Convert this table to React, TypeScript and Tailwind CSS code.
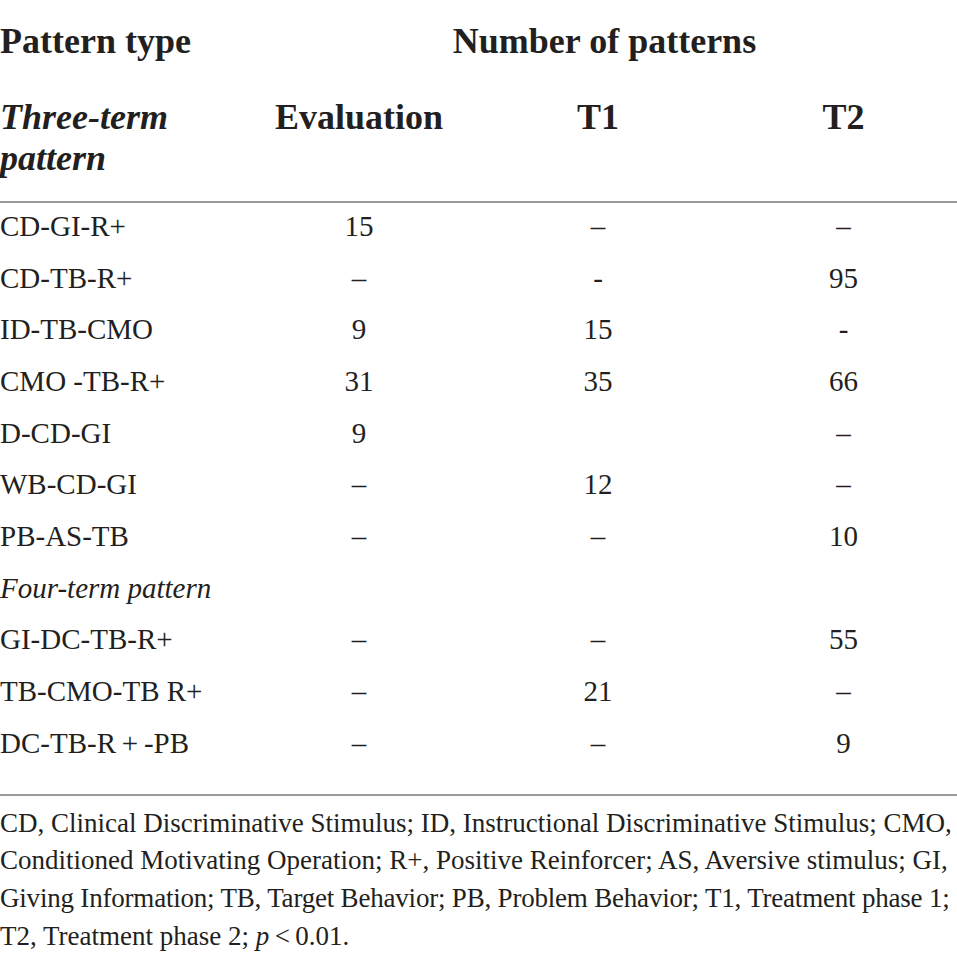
import React from "react";

const rows: [string, string, string, string, boolean?][] = [
  ["CD-GI-R+", "15", "\u2013", "\u2013"],
  ["CD-TB-R+", "\u2013", "-", "95"],
  ["ID-TB-CMO", "9", "15", "-"],
  ["CMO -TB-R+", "31", "35", "66"],
  ["D-CD-GI", "9", "", "\u2013"],
  ["WB-CD-GI", "\u2013", "12", "\u2013"],
  ["PB-AS-TB", "\u2013", "\u2013", "10"],
  ["Four-term pattern", "", "", "", true],
  ["GI-DC-TB-R+", "\u2013", "\u2013", "55"],
  ["TB-CMO-TB R+", "\u2013", "21", "\u2013"],
  ["DC-TB-R\u2009+\u2009-PB", "\u2013", "\u2013", "9"],
];

export default function App() {
  return (
    <div
      className="w-[957px] h-[958px] bg-white text-[#231f20] overflow-hidden"
      style={{ fontFamily: '"Liberation Serif", "Times New Roman", serif' }}
    >
      {/* Header */}
      <div className="border-b-2 border-[#9a9a9a]">
        <div className="grid grid-cols-[252px_705px] pt-[20.6px] text-[36px] leading-[40px] font-bold">
          <div className="whitespace-nowrap">Pattern type</div>
          <div className="text-center whitespace-nowrap">Number of patterns</div>
        </div>
        <div className="grid grid-cols-[252px_214px_264px_227px] mt-[38.7px] pb-[23.7px] text-[36px] leading-[37px] font-bold">
          <div className="italic">
            <div>Three-term</div>
            <div className="mt-[4px]">pattern</div>
          </div>
          <div className="text-center">Evaluation</div>
          <div className="text-center">T1</div>
          <div className="text-center">T2</div>
        </div>
      </div>

      {/* Body */}
      <div className="border-b-2 border-[#9a9a9a] pb-[22px] text-[29px]">
        {rows.map(([a, b, c, d, italic], i) => (
          <div
            key={i}
            className="grid grid-cols-[252px_214px_264px_227px] h-[51.7px] leading-[47.8px]"
          >
            <div className={italic ? "italic whitespace-nowrap" : "whitespace-nowrap"}>{a}</div>
            <div className="text-center">{b}</div>
            <div className="text-center">{c}</div>
            <div className="text-center">{d}</div>
          </div>
        ))}
      </div>

      {/* Footnote */}
      <div className="pt-[9px] text-[27px] leading-[37.7px] whitespace-nowrap">
        <div>CD, Clinical Discriminative Stimulus; ID, Instructional Discriminative Stimulus; CMO,</div>
        <div>Conditioned Motivating Operation; R+, Positive Reinforcer; AS, Aversive stimulus; GI,</div>
        <div className="tracking-[-0.2px]">
          Giving Information; TB, Target Behavior; PB, Problem Behavior; T1, Treatment phase 1;
        </div>
        <div>
          T2, Treatment phase 2; <span className="italic">p</span>
          {"\u2009<\u20090.01."}
        </div>
      </div>
    </div>
  );
}
